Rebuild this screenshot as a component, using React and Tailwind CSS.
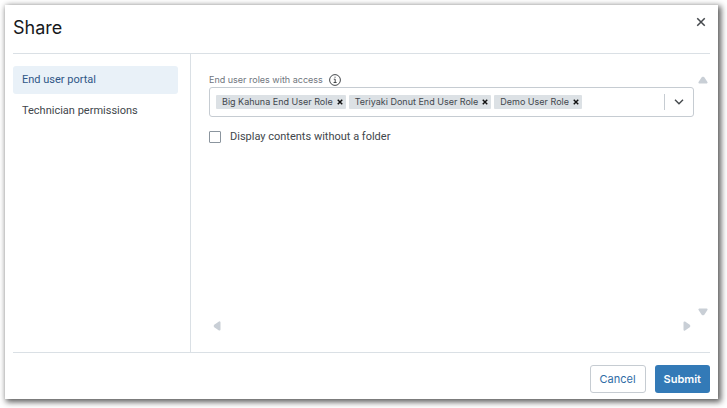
import { useState } from 'react';

const NAV_ITEMS = [
  { id: 'portal', label: 'End user portal' },
  { id: 'technician', label: 'Technician permissions' },
];

const INITIAL_ROLES = ['Big Kahuna End User Role', 'Teriyaki Donut End User Role', 'Demo User Role'];

const Cross = ({ className, width }) => (
  <svg viewBox="0 0 8 8" className={className} fill="none" stroke="currentColor" strokeWidth={width}>
    <path d="M1 1l6 6M7 1L1 7" />
  </svg>
);

// Scroll arrow, points up unless rotated
const Arrow = ({ className = '' }) => (
  <svg viewBox="0 0 10 8" className={`w-[10px] h-2 text-[#c9cfd6] ${className}`} fill="currentColor" stroke="currentColor" strokeWidth="2" strokeLinejoin="round">
    <path d="M4.5 1.8h1L8.6 6.5H1.4z" />
  </svg>
);

const RoleTag = ({ role, onRemove }) => (
  <span className="flex items-center gap-1 h-[14px] pl-1.5 pr-[3px] rounded-[1px] bg-[#dce1e5] text-[9px] leading-[14px] text-[#42474d] whitespace-nowrap">
    {role}
    <button type="button" aria-label={`Remove ${role}`} onClick={() => onRemove(role)} className="text-[#111]">
      <Cross className="w-[6px] h-[6px]" width="1.9" />
    </button>
  </span>
);

export default function App() {
  const [active, setActive] = useState('portal');
  const [roles, setRoles] = useState(INITIAL_ROLES);

  const removeRole = role => setRoles(roles.filter(r => r !== role));

  return (
    <div className="min-h-screen flex bg-white pt-[5px] pl-[5px] pr-[9px] pb-[9px] font-['Inter',sans-serif] text-[11px] leading-4 text-[#41464b]">
      <div role="dialog" aria-labelledby="share-title" className="flex-1 min-w-0 flex flex-col px-2 bg-white shadow-[2px_2px_6px_1px_rgba(0,0,0,0.65)]">

        {/* Header */}
        <header className="flex items-start justify-between h-[49px] border-b border-[#dae0e5]">
          <h1 id="share-title" className="pt-[11px] text-[18px] leading-6 text-[#16191c]">Share</h1>
          <button type="button" aria-label="Close" className="mt-3 mr-1 text-[#44484c]">
            <Cross className="w-[10px] h-[10px]" width="1.2" />
          </button>
        </header>

        {/* Body */}
        <div className="flex-1 flex">
          <nav className="w-[178px] shrink-0 flex flex-col gap-[3px] pt-3 pr-3 border-r border-[#dae0e5] font-['Roboto',sans-serif]">
            {NAV_ITEMS.map(item => (
              <button
                key={item.id}
                type="button"
                onClick={() => setActive(item.id)}
                className={`h-7 px-[9px] rounded-[3px] text-left ${item.id === active ? 'bg-[#e9f1f8] text-[#2f5787]' : ''}`}
              >
                {item.label}
              </button>
            ))}
          </nav>

          <main className="flex-1 min-w-0 flex flex-col pt-[18px] pl-[18px]">
            <div className="flex-1 flex gap-1">
              <div className="flex-1 min-w-0">
                <div className="flex items-center gap-1.5 h-[15px] text-[#70767d]">
                  <label htmlFor="roles" className="text-[9px] leading-[14px]">End user roles with access</label>
                  <svg viewBox="0 0 12 12" className="w-3 h-3 text-[#44484c]" fill="none" stroke="currentColor" strokeWidth="1">
                    <circle cx="6" cy="6" r="5.4" />
                    <path d="M4.8 5.2h1.4v3.3M4.6 8.5h3M5.5 3.2h1.1" />
                  </svg>
                </div>
                <div className="flex items-center gap-[3px] h-[30px] pl-1.5 border border-[#c6ccd2] rounded-[3px]">
                  {roles.map(role => <RoleTag key={role} role={role} onRemove={removeRole} />)}
                  <input id="roles" type="text" className="flex-1 min-w-0 h-5 outline-none text-[9px]" />
                  <button type="button" aria-label="Show roles" className="flex items-center justify-center w-[29px] h-4 border-l border-[#c6ccd2] text-[#44484c]">
                    <svg viewBox="0 0 10 6" className="w-[10px] h-[6px]" fill="none" stroke="currentColor" strokeWidth="1.4">
                      <path d="M1 0.8l4 4 4-4" />
                    </svg>
                  </button>
                </div>
                <label className="flex items-center gap-[9px] mt-3 font-['Roboto',sans-serif]">
                  <input type="checkbox" className="appearance-none w-3 h-3 border border-[#8b959e] rounded-[1px] bg-white checked:bg-[#337ab7]" />
                  Display contents without a folder
                </label>
              </div>
              <div className="flex flex-col justify-between w-3 pt-1">
                <Arrow />
                <Arrow className="rotate-180" />
              </div>
            </div>
            <div className="flex justify-between pl-[3px] pr-[18px] pt-1.5 pb-[22px]">
              <Arrow className="-rotate-90" />
              <Arrow className="rotate-90" />
            </div>
          </main>
        </div>

        {/* Footer */}
        <footer className="flex justify-end gap-[9px] pt-3 pb-1.5 border-t border-[#dae0e5]">
          <button type="button" className="h-7 px-[9px] border border-[#c6ccd2] rounded-[3px] text-[#2f6ca6]">Cancel</button>
          <button type="button" className="h-7 px-[9px] rounded-[3px] bg-[#337ab7] font-semibold text-white">Submit</button>
        </footer>
      </div>
    </div>
  );
}
